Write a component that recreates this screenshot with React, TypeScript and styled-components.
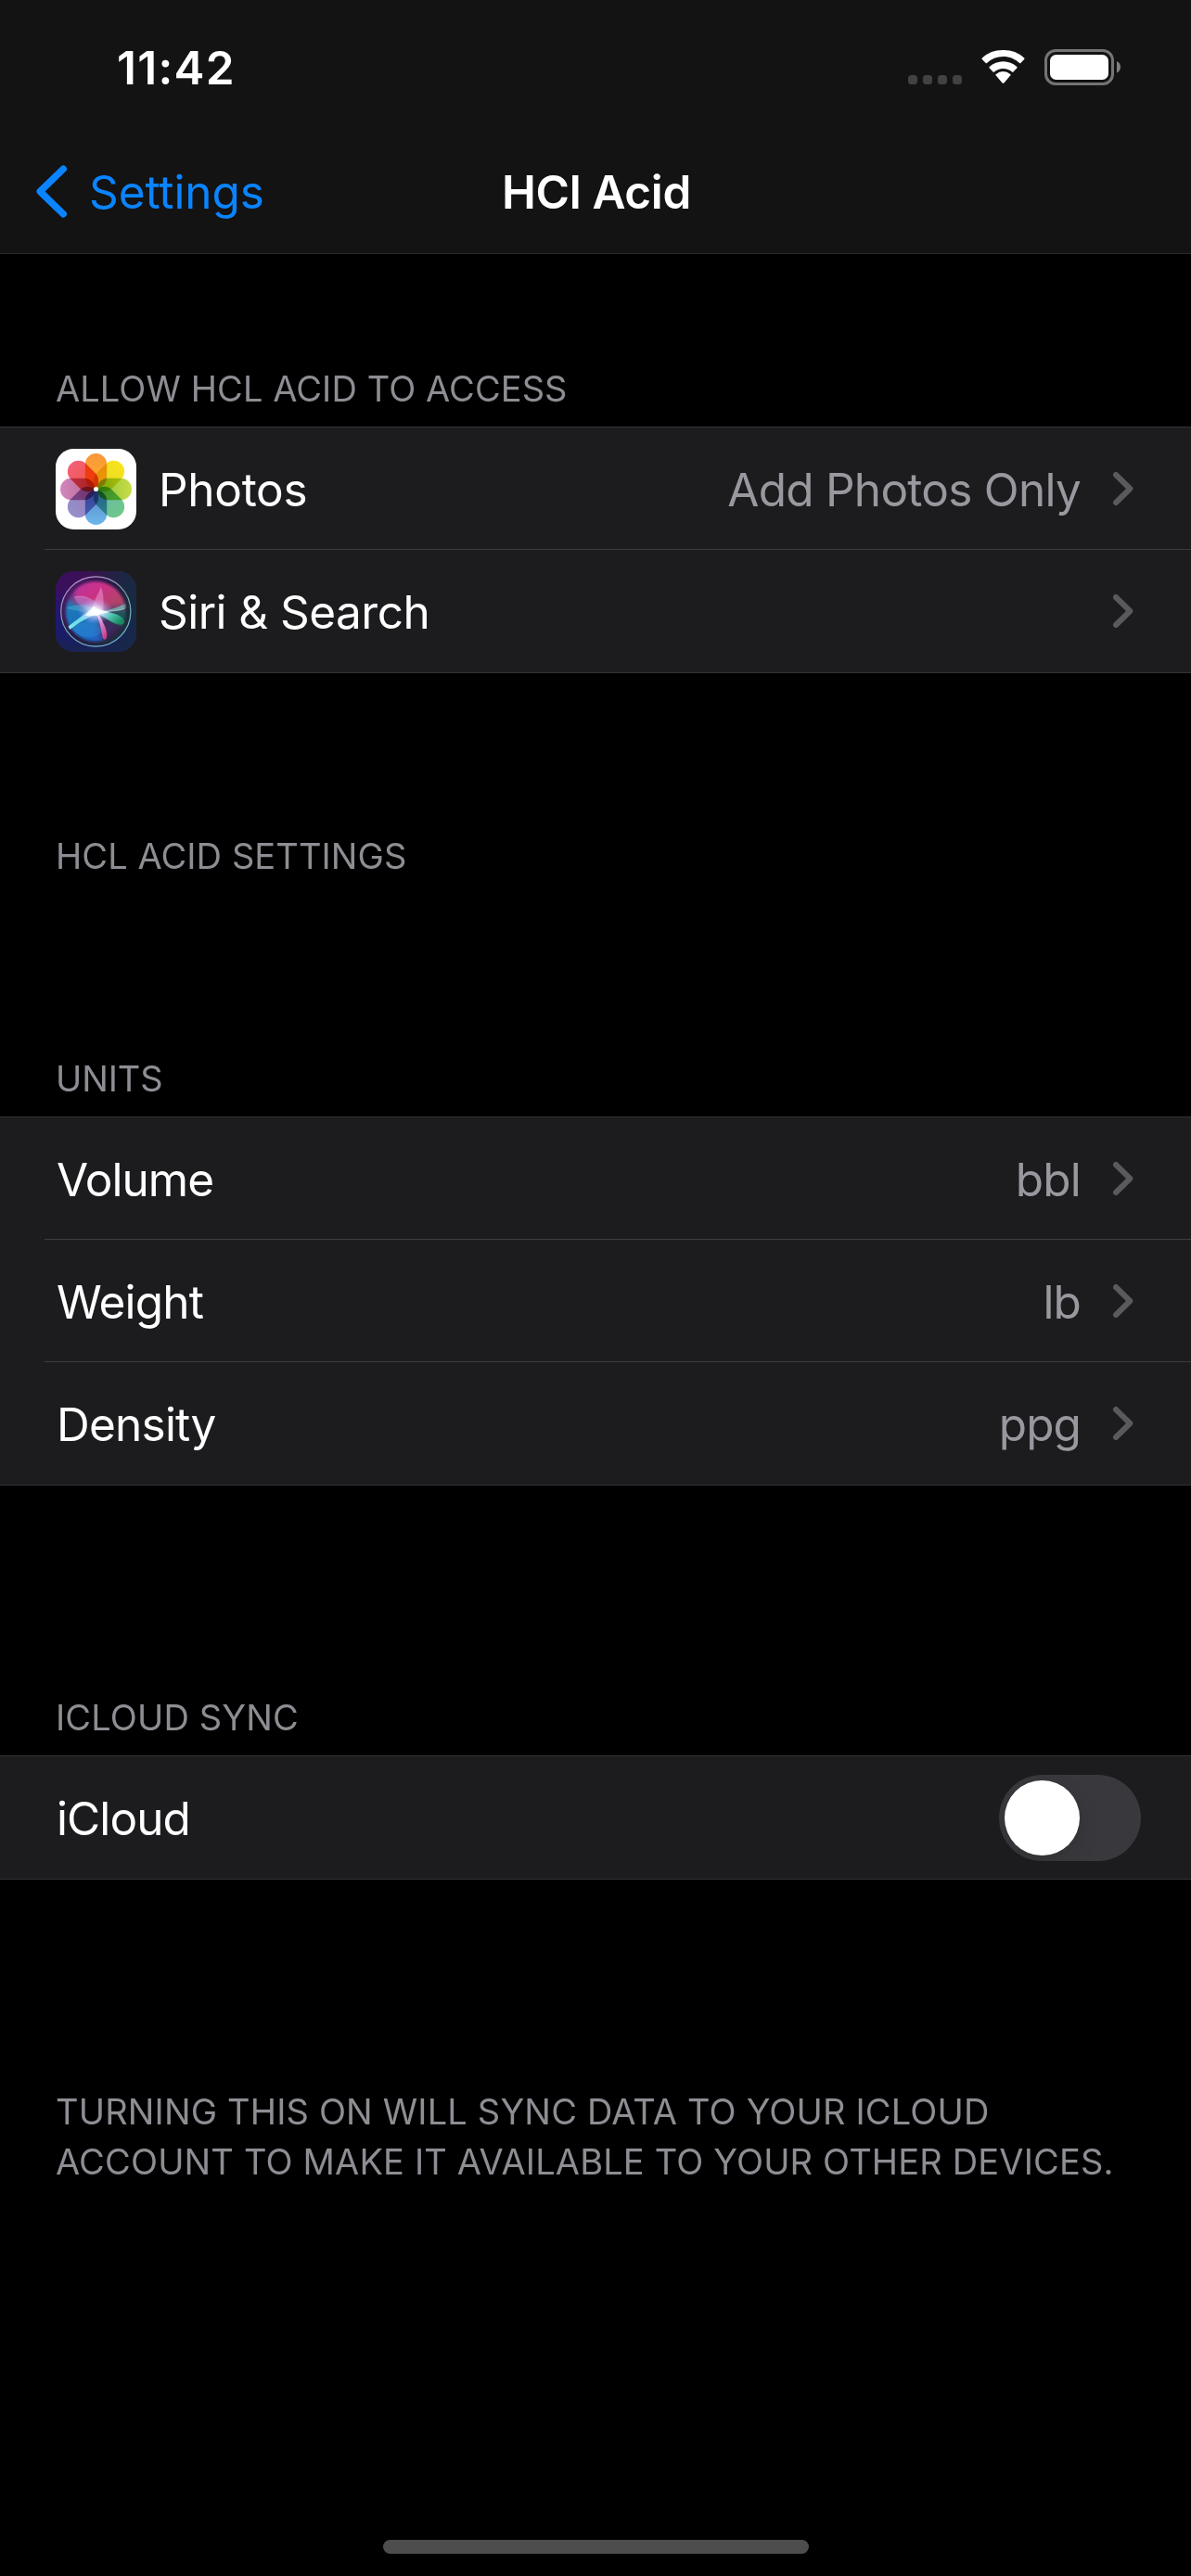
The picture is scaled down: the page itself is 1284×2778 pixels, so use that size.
import React, { useState } from "react";
import type { ReactNode } from "react";
import styled, { createGlobalStyle } from "styled-components";

const colors = {
  background: "#000000",
  bar: "#131313",
  cell: "#1c1c1e",
  edge: "#343436",
  divider: "#3d3d40",
  label: "#ffffff",
  value: "#98989f",
  caption: "#8d8d93",
  chevron: "#5a5a5e",
  tint: "#0a84ff",
};

const GlobalStyle = createGlobalStyle`
  *, *::before, *::after { box-sizing: border-box; }
  body {
    margin: 0;
    background: ${colors.background};
    font-family: Inter, "Liberation Sans", sans-serif;
    -webkit-font-smoothing: antialiased;
  }
`;

const Screen = styled.div`
  display: flex;
  flex-direction: column;
  width: 1284px;
  height: 2778px;
  background: ${colors.background};
  color: ${colors.label};
  overflow: hidden;
`;

const TopBar = styled.header`
  height: 274px;
  background: ${colors.bar};
  border-bottom: 1px solid #2a2a2b;
`;

const StatusBar = styled.div`
  display: flex;
  justify-content: space-between;
  height: 141px;
  padding: 43px 75px 0 126px;
`;

const Clock = styled.time`
  font-size: 49.5px;
  font-weight: 600;
  line-height: 60px;
  letter-spacing: 1.3px;
`;

const StatusIcons = styled.div`
  display: flex;
  align-items: flex-start;
  padding-top: 10px;
`;

const SignalDots = styled.div`
  display: flex;
  gap: 6px;
  margin: 28px 19px 0 0;
`;

const SignalDot = styled.span`
  width: 10px;
  height: 10px;
  border-radius: 3.5px;
  background: #424242;
`;

const BatterySvg = styled.svg`
  width: 83px;
  height: 39px;
  margin-left: 19px;
`;

const NavBar = styled.nav`
  display: grid;
  grid-template-columns: 1fr auto 1fr;
  align-items: center;
  height: 132px;
  padding: 0 39px;
`;

const BackButton = styled.button`
  display: flex;
  align-items: center;
  gap: 23px;
  padding: 0;
  border: 0;
  background: none;
  color: ${colors.tint};
  font: 400 49.5px/60px Inter, "Liberation Sans", sans-serif;
  letter-spacing: -0.1px;
`;

const Title = styled.h1`
  margin: 0 -1px 0 1px;
  font-size: 49.5px;
  font-weight: 600;
  line-height: 60px;
  letter-spacing: -0.34px;
`;

const Section = styled.section`
  display: flex;
  flex-direction: column;
`;

const SectionHeader = styled.h2<{ $height: number; $tracking?: number }>`
  display: flex;
  align-items: flex-end;
  height: ${(p) => p.$height}px;
  margin: 0;
  padding: 0 60px 18px;
  color: ${colors.caption};
  font-size: 38px;
  font-weight: 400;
  line-height: 46px;
  letter-spacing: ${(p) => p.$tracking ?? 0.08}px;
  text-transform: uppercase;
`;

const Group = styled.ul`
  margin: 0;
  padding: 0 0 0 48px;
  list-style: none;
  background: ${colors.cell};
  border-top: 1px solid ${colors.edge};
  border-bottom: 1px solid ${colors.edge};
`;

const Row = styled.li`
  display: flex;
  align-items: center;
  height: 132px;
  padding: 0 60px 0 12px;
  border-bottom: 1px solid ${colors.divider};

  &:last-child {
    border-bottom-color: transparent;
  }
`;

const AppIcon = styled.svg`
  flex: none;
  align-self: flex-start;
  width: 87px;
  height: 87px;
  margin: 23px 23px 0 0;
`;

const PetalGroup = styled.g`
  isolation: isolate;
`;

const Petal = styled.rect`
  mix-blend-mode: multiply;
`;

const RowLabel = styled.span<{ $tracking: number }>`
  flex: 1;
  padding: 2px 0 0 1px;
  font-size: 49.5px;
  line-height: 60px;
  letter-spacing: ${(p) => p.$tracking}px;
`;

const RowValue = styled.span<{ $tracking: number }>`
  margin-right: 35px;
  padding-top: 2px;
  color: ${colors.value};
  font-size: 49.5px;
  line-height: 60px;
  letter-spacing: ${(p) => p.$tracking}px;
`;

const Track = styled.button<{ $on: boolean }>`
  display: flex;
  justify-content: ${(p) => (p.$on ? "flex-end" : "flex-start")};
  width: 153px;
  height: 93px;
  margin: 2px -6px 0 0;
  padding: 6px;
  border: 0;
  border-radius: 47px;
  background: ${(p) => (p.$on ? "#30d158" : "#39393d")};
  overflow: hidden;
`;

const Knob = styled.span`
  width: 81px;
  height: 81px;
  border-radius: 50%;
  background: #ffffff;
  box-shadow: 0 9px 24px rgba(0, 0, 0, 0.12);
`;

const Footnote = styled.p`
  margin: 223px 0 0;
  padding: 0 60px;
  color: ${colors.caption};
  font-size: 38px;
  line-height: 54px;
  letter-spacing: 0.16px;
  text-transform: uppercase;
`;

const HomeArea = styled.footer`
  display: flex;
  justify-content: center;
  margin-top: auto;
  padding-bottom: 24px;
`;

const HomeIndicator = styled.span`
  width: 459px;
  height: 15px;
  border-radius: 8px;
  background: #4d4d4d;
`;

const WifiIcon = () => (
  <svg width="51" height="38" viewBox="0 0 51 38" fill="#fff">
    <path d="M25.5 7.9c6.7 0 12.9 2.6 17.6 7.1.4.4.9.4 1.2 0l3.9-4c.5-.5.5-1.1 0-1.6A33 33 0 0 0 25.5 1 33 33 0 0 0 2.8 9.4c-.5.5-.5 1.1 0 1.6l3.9 4c.3.4.8.4 1.2 0A25.4 25.4 0 0 1 25.5 7.9Z" />
    <path d="M25.5 20.9c3.6 0 7 1.3 9.6 3.7.4.4.9.4 1.3 0l3.9-4c.5-.5.5-1.1 0-1.6a21.6 21.6 0 0 0-29.6 0c-.5.5-.5 1.1 0 1.6l3.9 4c.4.4.9.4 1.3 0a14.2 14.2 0 0 1 9.6-3.7Z" />
    <path d="M33.2 28.5c.5-.5.5-1.2 0-1.6a12 12 0 0 0-15.4 0c-.5.4-.5 1.1 0 1.6l6.8 7.9c.6.6 1.2.6 1.8 0l6.8-7.9Z" />
  </svg>
);

const BatteryIcon = () => (
  <BatterySvg viewBox="0 0 83 39">
    <rect x="1.5" y="1.5" width="72" height="36" rx="10.5" fill="none" stroke="#747474" strokeWidth="3" />
    <rect x="6" y="6" width="63" height="27" rx="6.5" fill="#fff" />
    <path d="M78 13c2.6 1.1 4 3.6 4 6.3s-1.4 5.2-4 6.3Z" fill="#808080" />
  </BatterySvg>
);

const BackChevron = () => (
  <svg width="34" height="58" viewBox="0 0 34 58" fill="none" stroke={colors.tint} strokeWidth="7.4" strokeLinecap="round" strokeLinejoin="round">
    <path d="M29.3 4.2 4.2 28.5l25.1 24.300" />
  </svg>
);

const DisclosureChevron = () => (
  <svg width="24" height="38" viewBox="0 0 24 38" fill="none" stroke={colors.chevron} strokeWidth="6" strokeLinecap="round" strokeLinejoin="round">
    <path d="M3 4l15.3 15L3 34" />
  </svg>
);

const petals = [
  { angle: 0, outer: "#f8953c", inner: "#ffb624" },
  { angle: 45, outer: "#fae31c", inner: "#dfdc2c" },
  { angle: 90, outer: "#c9dd45", inner: "#86c440" },
  { angle: 135, outer: "#70c886", inner: "#68b5b8" },
  { angle: 180, outer: "#6bb7ea", inner: "#5c86c9" },
  { angle: 225, outer: "#9290cb", inner: "#a17dba" },
  { angle: 270, outer: "#d386bd", inner: "#b5678f" },
  { angle: 315, outer: "#f4607c", inner: "#ee5636" },
];

const PhotosIcon = () => (
  <AppIcon viewBox="0 0 87 87">
    <defs>
      {petals.map((p) => (
        <linearGradient key={p.angle} id={`petal-${p.angle}`} x1="0" y1="0" x2="0" y2="1">
          <stop offset="0" stopColor={p.outer} />
          <stop offset="1" stopColor={p.inner} />
        </linearGradient>
      ))}
    </defs>
    <rect width="87" height="87" rx="19.5" fill="#fff" />
    <PetalGroup>
      {petals.map((p) => (
        <Petal
          key={p.angle}
          x="31.8"
          y="5"
          width="23.4"
          height="37.5"
          rx="11.7"
          fill={`url(#petal-${p.angle})`}
          transform={`rotate(${p.angle} 43.5 43.5)`}
        />
      ))}
    </PetalGroup>
    <circle cx="43.5" cy="43.5" r="2.5" fill="#fff" />
  </AppIcon>
);

const SiriIcon = () => (
  <AppIcon viewBox="0 0 87 87">
    <defs>
      <linearGradient id="siri-base" x1="0" y1="0.1" x2="1" y2="0.3">
        <stop offset="0" stopColor="#3a1060" />
        <stop offset="0.5" stopColor="#3a124e" />
        <stop offset="1" stopColor="#1a2a40" />
      </linearGradient>
      <linearGradient id="siri-floor" x1="0.1" y1="0" x2="0" y2="1">
        <stop offset="0.2" stopColor="#171a80" stopOpacity="0" />
        <stop offset="0.6" stopColor="#15197a" stopOpacity="0.8" />
        <stop offset="1" stopColor="#16264f" stopOpacity="0.95" />
      </linearGradient>
      <linearGradient id="siri-side" x1="0" y1="0" x2="1" y2="0">
        <stop offset="0.4" stopColor="#182a42" stopOpacity="0" />
        <stop offset="1" stopColor="#182a42" stopOpacity="0.9" />
      </linearGradient>
      <linearGradient id="siri-well" x1="0" y1="0" x2="1" y2="0.7">
        <stop offset="0" stopColor="#5c1c70" />
        <stop offset="0.5" stopColor="#2a1848" />
        <stop offset="1" stopColor="#1c303c" />
      </linearGradient>
      <linearGradient id="siri-ring" x1="0.2" y1="0" x2="0.6" y2="1">
        <stop offset="0" stopColor="#c490d2" />
        <stop offset="0.55" stopColor="#6fae98" />
        <stop offset="1" stopColor="#78b9dc" />
      </linearGradient>
      <linearGradient id="siri-pink" x1="0" y1="0" x2="1" y2="0.7">
        <stop offset="0" stopColor="#a83aa8" />
        <stop offset="0.45" stopColor="#cc2f88" />
        <stop offset="1" stopColor="#a84a5c" />
      </linearGradient>
      <linearGradient id="siri-blue" x1="0" y1="0" x2="0.5" y2="1">
        <stop offset="0" stopColor="#1f7eb0" />
        <stop offset="1" stopColor="#1d68c4" />
      </linearGradient>
      <linearGradient id="siri-teal" x1="0" y1="0" x2="1" y2="0.6">
        <stop offset="0" stopColor="#e8ffff" />
        <stop offset="0.5" stopColor="#5cdcc4" />
        <stop offset="1" stopColor="#1a8f66" />
      </linearGradient>
      <linearGradient id="siri-cyan" x1="1" y1="0" x2="0" y2="1">
        <stop offset="0" stopColor="#f4ffff" />
        <stop offset="0.6" stopColor="#72e4ea" />
        <stop offset="1" stopColor="#8ff5ee" />
      </linearGradient>
      <linearGradient id="siri-rose" x1="0.2" y1="0" x2="0.7" y2="1">
        <stop offset="0" stopColor="#fff0fc" />
        <stop offset="0.5" stopColor="#ee86cc" />
        <stop offset="1" stopColor="#d0448c" />
      </linearGradient>
      <radialGradient id="siri-glow">
        <stop offset="0" stopColor="#ffffff" />
        <stop offset="0.25" stopColor="#eef8ff" stopOpacity="0.8" />
        <stop offset="1" stopColor="#b09cff" stopOpacity="0" />
      </radialGradient>
      <radialGradient id="siri-fade" gradientUnits="userSpaceOnUse" cx="43.3" cy="43.5" r="34.5">
        <stop offset="0.88" stopColor="#fff" />
        <stop offset="1" stopColor="#000" />
      </radialGradient>
      <mask id="siri-orb">
        <circle cx="43.3" cy="43.5" r="34.5" fill="url(#siri-fade)" />
      </mask>
      <filter id="siri-soft" x="-20%" y="-20%" width="140%" height="140%">
        <feGaussianBlur stdDeviation="3" />
      </filter>
      <filter id="siri-fine" x="-20%" y="-20%" width="140%" height="140%">
        <feGaussianBlur stdDeviation="0.4" />
      </filter>
    </defs>
    <rect width="87" height="87" rx="19.5" fill="url(#siri-base)" />
    <rect width="87" height="87" rx="19.5" fill="url(#siri-floor)" />
    <rect width="87" height="87" rx="19.5" fill="url(#siri-side)" />
    <circle cx="43.3" cy="43.5" r="37.5" fill="url(#siri-well)" />
    <g mask="url(#siri-orb)">
      <rect x="8" y="8" width="71" height="71" fill="#43327c" />
      <g filter="url(#siri-soft)">
        <path d="M43 42 18 30 20 4h40l24 32Z" fill="url(#siri-pink)" />
        <path d="M43 43 4 28v50h46l-2-10Z" fill="url(#siri-blue)" />
        <path d="M43 43 56 80 80 66 74 56Z" fill="#34204e" />
        <path d="M48 45 84 38v24l-12-3Z" fill="#1c5458" />
        <ellipse cx="56" cy="60" rx="9" ry="7" fill="#3f2a60" />
      </g>
      <g filter="url(#siri-fine)">
        <path d="M44 45C33 43 23 36 20 28 31 25 42 31 49 42Z" fill="#b8a4ec" opacity="0.4" />
        <path d="M38 45C40 34 45 26 49 17c3 8 3 17 2 28Z" fill="#f29bdd" opacity="0.5" />
        <path d="M44 44C54 43 65 40 75 35c2 4 0 6-7 7-8 1-15 2-24 2Z" fill="#7fdcd0" opacity="0.6" />
        <path d="M43 41C33 35 21 35 11 40c8 2 18 4 28 5Z" fill="#58c8e0" opacity="0.35" />
        <path d="M14 60C24 56 34 58 44 44l6 20c-3 8-20 10-30 2Z" fill="#3aa4e8" opacity="0.25" />
      </g>
      <path d="M20 28c10-3 22 2 29 13" fill="none" stroke="#dcc0f5" strokeWidth="0.7" opacity="0.6" />
      <path d="M75 35c2 4 0 6-7 7-8 1-15 2-24 2" fill="none" stroke="#b8f5ea" strokeWidth="0.8" opacity="0.8" />
    </g>
    <g filter="url(#siri-fine)" opacity="0.92">
      <path d="M44 41C54 44 68 45 72.5 51c3 4 1 7.5-4.5 6.5C60 56 53 49 43 45Z" fill="url(#siri-teal)" />
      <path d="M41 38.5C34 44 22 53 13.5 59.5l1.8 3.5C24 56 36 49 46 46Z" fill="url(#siri-cyan)" />
      <path d="M45 42c3 8 9.5 18 10.2 25 .5 7-2.7 8-4.2 5-2-6-2-16-8-27Z" fill="url(#siri-rose)" />
    </g>
    <ellipse cx="43" cy="43" rx="19" ry="14" fill="url(#siri-glow)" />
    <g filter="url(#siri-fine)">
      <path d="M32 48 41 37.5l5 3.5 12 3-10 2.5-4 1.5Z" fill="#fff" opacity="0.8" />
    </g>
    <circle cx="43.3" cy="43.5" r="37.6" fill="none" stroke="url(#siri-ring)" strokeWidth="1.2" />
  </AppIcon>
);

interface SettingRowProps {
  label: string;
  labelTracking: number;
  icon?: ReactNode;
  value?: string;
  valueTracking?: number;
}

const SettingRow = ({ label, labelTracking, icon, value, valueTracking = -0.8 }: SettingRowProps) => (
  <Row>
    {icon}
    <RowLabel $tracking={labelTracking}>{label}</RowLabel>
    {value && <RowValue $tracking={valueTracking}>{value}</RowValue>}
    <DisclosureChevron />
  </Row>
);

export default function App() {
  const [synced, setSynced] = useState(false);

  return (
    <>
      <GlobalStyle />
      <Screen>
        <TopBar>
          <StatusBar>
            <Clock>11:42</Clock>
            <StatusIcons>
              <SignalDots>
                <SignalDot />
                <SignalDot />
                <SignalDot />
                <SignalDot />
              </SignalDots>
              <WifiIcon />
              <BatteryIcon />
            </StatusIcons>
          </StatusBar>
          <NavBar>
            <BackButton>
              <BackChevron />
              Settings
            </BackButton>
            <Title>HCl Acid</Title>
          </NavBar>
        </TopBar>

        <Section>
          <SectionHeader $height={186}>Allow HCl Acid to Access</SectionHeader>
          <Group>
            <SettingRow icon={<PhotosIcon />} label="Photos" labelTracking={-0.3} value="Add Photos Only" valueTracking={-0.74} />
            <SettingRow icon={<SiriIcon />} label="Siri &amp; Search" labelTracking={-0.54} />
          </Group>
        </Section>

        <Section>
          <SectionHeader $height={238}>HCl Acid Settings</SectionHeader>
        </Section>

        <Section>
          <SectionHeader $height={240} $tracking={-0.1}>Units</SectionHeader>
          <Group>
            <SettingRow label="Volume" labelTracking={-0.95} value="bbl" valueTracking={-0.8} />
            <SettingRow label="Weight" labelTracking={-0.8} value="lb" valueTracking={-0.9} />
            <SettingRow label="Density" labelTracking={-0.77} value="ppg" valueTracking={-0.9} />
          </Group>
        </Section>

        <Section>
          <SectionHeader $height={291} $tracking={0.14}>iCloud Sync</SectionHeader>
          <Group>
            <Row>
              <RowLabel $tracking={-0.9}>iCloud</RowLabel>
              <Track $on={synced} role="switch" aria-checked={synced} onClick={() => setSynced(!synced)}>
                <Knob />
              </Track>
            </Row>
          </Group>
          <Footnote>
            Turning this on will sync data to your iCloud
            <br />
            account to make it available to your other devices.
          </Footnote>
        </Section>

        <HomeArea>
          <HomeIndicator />
        </HomeArea>
      </Screen>
    </>
  );
}
